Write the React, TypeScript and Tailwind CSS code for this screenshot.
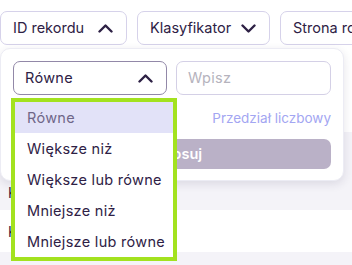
import React from 'react';

const font = { fontFamily: 'Inter, "Open Sans", sans-serif' };

function Chevron({ up }: { up?: boolean }) {
  return (
    <svg width="15" height="9" viewBox="0 0 15 9" fill="none" className="shrink-0">
      <path
        d={up ? 'M1.5 7.5L7.5 1.5L13.5 7.5' : 'M1.5 1.5L7.5 7.5L13.5 1.5'}
        stroke="#2e2145"
        strokeWidth="2.4"
        strokeLinecap="round"
        strokeLinejoin="round"
      />
    </svg>
  );
}

const filters = [
  { label: 'ID rekordu', open: true, w: 'w-[127px]' },
  { label: 'Klasyfikator', open: false, w: 'w-[133px]' },
  { label: 'Strona rodzica', open: false, w: 'w-[140px]' },
];

const options = ['Równe', 'Większe niż', 'Większe lub równe', 'Mniejsze niż', 'Mniejsze lub równe'];

export default function App() {
  return (
    <div className="relative h-[265px] w-[352px] overflow-hidden bg-white text-[#2e2145]" style={font}>
      <div className="flex h-[132px] gap-[10px] pt-[11px]">
        {filters.map((f) => (
          <div
            key={f.label}
            className={`flex h-[34px] shrink-0 items-center justify-between rounded-[7px] border border-[#d6d2ea] pl-[12px] pr-[13px] text-[14.5px] whitespace-nowrap ${f.w}`}
          >
            <span>{f.label}</span>
            {f.label !== 'Strona rodzica' && <Chevron up={f.open} />}
          </div>
        ))}
      </div>

      <div className="h-[78px] bg-[#f4f3f8] pl-[8px] pt-[50px] text-[14px]">K</div>
      <div className="flex h-[42px] items-center bg-white pl-[8px] text-[14px]">K</div>
      <div className="h-[42px] bg-[#f4f3f8]" />

      <div className="absolute left-0 top-[48px] w-[344px] rounded-[10px] border border-[#ececf4] bg-white px-[12px] pb-[11px] pt-[12px] shadow-[0_3px_10px_rgba(40,30,70,0.12)]">
        <div className="flex gap-[9px]">
          <div className="flex h-[34px] w-[154px] items-center justify-between rounded-[7px] border border-[#9288a8] pl-[11px] pr-[13px] text-[14.5px] tracking-[0.3px]">
            <span>Równe</span>
            <Chevron up />
          </div>
          <div className="flex h-[34px] flex-1 items-center rounded-[7px] border border-[#d4d0e6] px-[11px] text-[14.5px] tracking-[0.3px] text-[#b5b3bd]">
            Wpisz
          </div>
        </div>
        <div className="mt-[13px] text-right text-[13.5px] text-[#a3a6f2]">Przedział liczbowy</div>
        <div className="mt-[11px] flex h-[30px] items-center justify-center rounded-[7px] bg-[#bab1c7] text-[14.5px] font-semibold text-white">
          Zastosuj
        </div>
      </div>

      <div className="absolute left-[11px] top-[98px] w-[166px] border-[4px] border-[#a3e21f] bg-white">
        {options.map((o, i) => (
          <div
            key={o}
            className={`flex h-[31px] items-center pl-[12px] text-[14.5px] tracking-[0.3px] whitespace-nowrap ${
              i === 0 ? 'bg-[#e2e2f8] text-[#6f6688]' : ''
            }`}
          >
            {o}
          </div>
        ))}
      </div>
    </div>
  );
}
